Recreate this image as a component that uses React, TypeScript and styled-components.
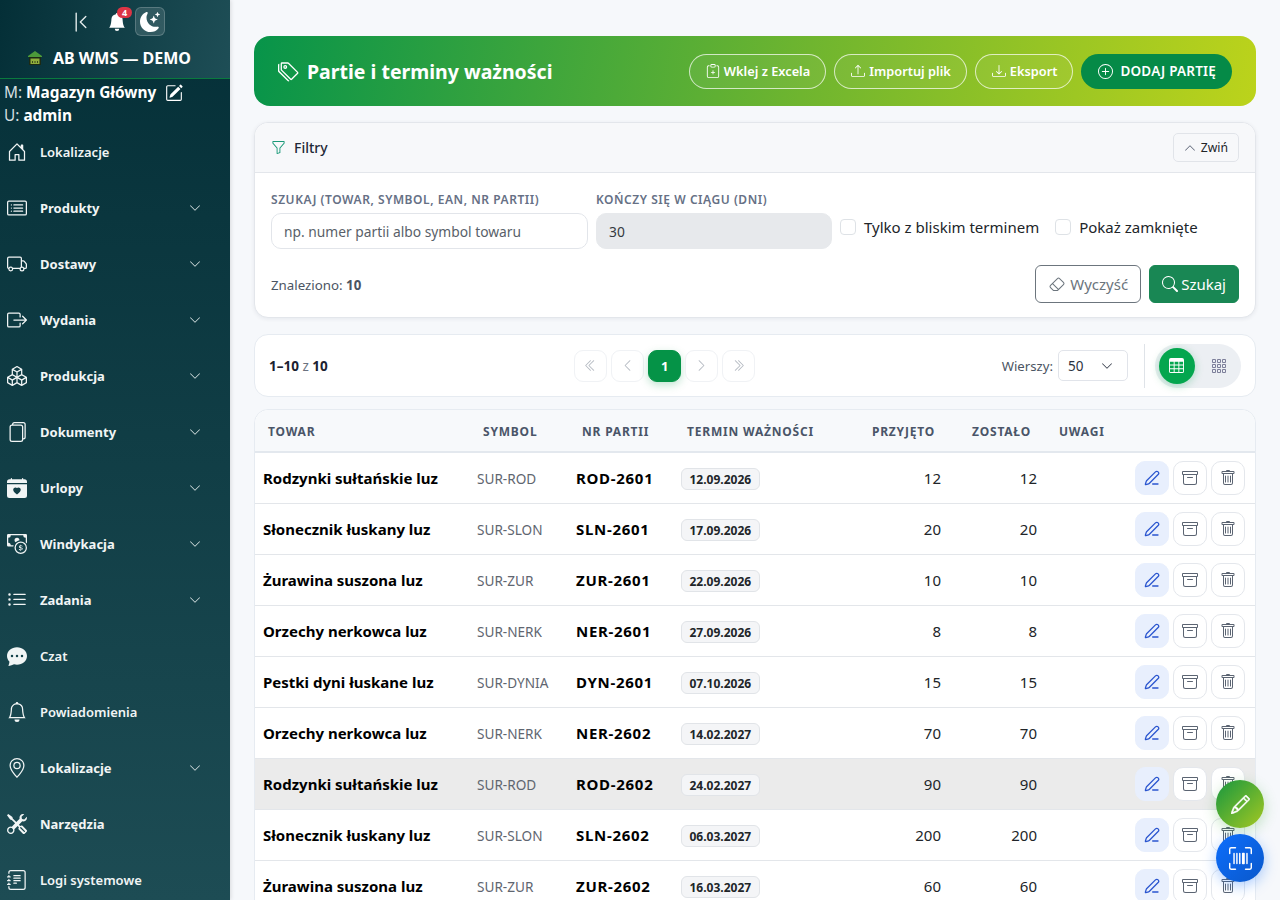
import React from 'react';
import styled, { createGlobalStyle } from 'styled-components';
import {
  BsArchive, BsBell, BsBellFill, BsBoxArrowRight, BsBoxes, BsCalendarHeartFill, BsCardList, BsCashCoin,
  BsChatDotsFill, BsChevronBarLeft, BsChevronDoubleLeft, BsChevronDoubleRight, BsChevronDown, BsChevronLeft,
  BsChevronRight, BsChevronUp, BsClipboardPlus, BsDownload, BsEraser, BsFiles, BsFunnel, BsGeoAlt,
  BsGrid3X3Gap, BsHouseDoor, BsJournalText, BsListUl, BsMoonStarsFill, BsPencil, BsPencilSquare, BsPlusCircle,
  BsSearch, BsTable, BsTags, BsTools, BsTrash, BsTruck, BsUpcScan, BsUpload,
} from 'react-icons/bs';
import { PenLine } from 'lucide-react';

const GlobalStyle = createGlobalStyle`
  html, body { margin: 0; height: 100%; overflow: hidden; }
  body {
    font-family: "Noto Sans", "Open Sans", sans-serif;
    background: #f6f8fb;
    color: #212529;
  }
  * { box-sizing: border-box; }
`;

const Layout = styled.div`
  display: flex;
  height: 900px;
  overflow: hidden;
`;

const Sidebar = styled.aside`
  width: 230px;
  flex: none;
  color: #fff;
  background: linear-gradient(180deg, #042f37 0%, #1d4c54 100%);
  box-shadow: 1px 0 4px rgba(0, 0, 0, .12);
`;

const SideHeader = styled.header`
  height: 79px;
  padding-top: 7px;
  border-bottom: 1px solid #0a7a3e;
  background: linear-gradient(100deg, #042f37 0%, #1e4e56 100%);
`;

const SideTools = styled.div`
  display: flex;
  align-items: center;
  justify-content: center;
  height: 29px;
  padding-left: 5px;
`;

const CollapseIcon = styled.span`
  display: flex;
  font-size: 22px;
  color: #e4ecec;
  margin-right: 16px;
`;

const BellWrap = styled.span`
  position: relative;
  display: flex;
  font-size: 18px;
  margin-right: 9px;
`;

const BellBadge = styled.span`
  position: absolute;
  top: -6px;
  right: -6px;
  min-width: 15px;
  height: 11px;
  border-radius: 6px;
  background: #dc3545;
  color: #fff;
  font-size: 9px;
  font-weight: 700;
  line-height: 11px;
  text-align: center;
`;

const ThemeButton = styled.span`
  display: flex;
  align-items: center;
  justify-content: center;
  width: 30px;
  height: 29px;
  border-radius: 6px;
  font-size: 20px;
  background: rgba(255, 255, 255, .12);
  border: 1px solid rgba(255, 255, 255, .2);
`;

const Brand = styled.div`
  display: flex;
  align-items: center;
  justify-content: center;
  gap: 10px;
  margin-top: 10px;
  padding-right: 12px;
  font-size: 16px;
  font-weight: 700;
  line-height: 24px;
`;

const UserInfo = styled.div`
  height: 45px;
  padding: 2px 0 0 4px;
  font-size: 15.4px;
  line-height: 23px;
  color: #d5dfe0;
`;

const InfoLine = styled.div`
  display: flex;
  align-items: center;
  gap: 4px;
  white-space: nowrap;
  strong { color: #fff; font-weight: 700; }
  svg { color: #fff; font-size: 18px; margin-left: 5px; }
`;

const Nav = styled.nav`
  display: flex;
  flex-direction: column;
`;

const NavItem = styled.a<{ $bold?: boolean }>`
  display: flex;
  align-items: center;
  height: 56px;
  padding: 0 29px 0 7px;
  color: #f1f5f5;
  font-size: 13px;
  font-weight: ${p => (p.$bold ? 700 : 600)};
`;

const NavIcon = styled.span`
  display: flex;
  justify-content: center;
  width: 20px;
  margin-right: 13px;
  font-size: 20px;
`;

const NavChevron = styled.span`
  display: flex;
  margin-left: auto;
  font-size: 12px;
  color: #dfe8e8;
`;

const Main = styled.main`
  flex: 1;
  min-width: 0;
  padding: 36px 24px 0;
  display: flex;
  flex-direction: column;
`;

const Hero = styled.section`
  display: flex;
  align-items: center;
  height: 70px;
  flex: none;
  padding: 0 24px;
  border-radius: 16px;
  color: #fff;
  background: linear-gradient(100deg, #07944a 0%, #6fb52f 55%, #bcd31b 100%);
`;

const HeroTitle = styled.h1`
  display: flex;
  align-items: center;
  gap: 8px;
  margin: 0 auto 0 0;
  font-size: 19.5px;
  font-weight: 700;
  svg { font-size: 21px; }
`;

const HeroButtons = styled.div`
  display: flex;
  gap: 8px;
`;

const GhostPill = styled.button`
  display: flex;
  align-items: center;
  gap: 4px;
  height: 35px;
  padding: 0 15px 0 16px;
  border: 1px solid rgba(255, 255, 255, .7);
  border-radius: 18px;
  background: rgba(255, 255, 255, .05);
  color: #fff;
  font: 600 12.8px "Noto Sans", sans-serif;
  svg { font-size: 14px; }
`;

const AddPill = styled.button`
  display: flex;
  align-items: center;
  gap: 7px;
  height: 35px;
  padding: 0 16px 0 17px;
  border: none;
  border-radius: 18px;
  background: #058a47;
  color: #fff;
  font: 600 13.5px "Noto Sans", sans-serif;
  letter-spacing: .2px;
  svg { font-size: 15px; }
`;

const FilterCard = styled.section`
  flex: none;
  margin-top: 16px;
  height: 196px;
  background: #fff;
  border: 1px solid #e3e6eb;
  border-radius: 14px;
  box-shadow: 0 1px 4px rgba(20, 30, 50, .07);
  overflow: hidden;
`;

const FilterHead = styled.div`
  display: flex;
  align-items: center;
  height: 50px;
  padding: 0 16px;
  background: #f7f8fa;
  border-bottom: 1px solid #e3e6eb;
`;

const FilterTitle = styled.div`
  display: flex;
  align-items: center;
  gap: 8px;
  font-size: 14px;
  font-weight: 500;
  color: #1f2937;
  margin-right: auto;
  svg { color: #1a9a78; font-size: 15px; }
`;

const CollapseButton = styled.button`
  display: flex;
  align-items: center;
  gap: 5px;
  height: 29px;
  padding: 0 10px;
  background: #f7f8fa;
  border: 1px solid #e1e4e9;
  border-radius: 5px;
  color: #212529;
  font: 400 12.2px "Noto Sans", sans-serif;
  svg { font-size: 12px; color: #596273; }
`;

const FilterBody = styled.div`
  padding: 18px 16px 0;
`;

const FilterRow = styled.div`
  display: flex;
  align-items: flex-end;
  gap: 8px;
`;

const Field = styled.label<{ $width: number }>`
  display: flex;
  flex-direction: column;
  width: ${p => p.$width}px;
`;

const FieldLabel = styled.span`
  height: 22px;
  font-size: 12px;
  font-weight: 600;
  line-height: 17px;
  letter-spacing: .55px;
  color: #667085;
  white-space: nowrap;
`;

const TextInput = styled.input<{ $filled?: boolean }>`
  height: 36px;
  padding: 0 12px;
  border: 1px solid ${p => (p.$filled ? '#e7e9ec' : '#e2e5ea')};
  border-radius: 10px;
  background: ${p => (p.$filled ? '#e7e9ec' : '#fff')};
  color: #343a40;
  font: 400 13.8px "Noto Sans", sans-serif;
  outline: none;
  &::placeholder { color: #595f69; opacity: 1; }
`;

const CheckLabel = styled.label`
  display: flex;
  align-items: center;
  gap: 8px;
  height: 36px;
  padding-bottom: 9px;
  margin-right: 8px;
  font-size: 15px;
  color: #212529;
  white-space: nowrap;
`;

const CheckBox = styled.input`
  appearance: none;
  width: 16px;
  height: 16px;
  margin: 0;
  border: 1px solid #dee2e6;
  border-radius: 4px;
  background: #fff;
`;

const FilterFoot = styled.div`
  display: flex;
  align-items: center;
  gap: 8px;
  margin-top: 16px;
`;

const FoundText = styled.div`
  margin-right: auto;
  padding-top: 1px;
  font-size: 13.3px;
  color: #4b5563;
  strong { font-weight: 700; }
`;

const ClearButton = styled.button`
  display: flex;
  align-items: center;
  gap: 5px;
  height: 38px;
  padding: 0 12px 0 13px;
  border: 1px solid #6c757d;
  border-radius: 6px;
  background: #fff;
  color: #6c757d;
  font: 400 15px "Noto Sans", sans-serif;
  svg { font-size: 16px; }
`;

const SearchButton = styled.button`
  display: flex;
  align-items: center;
  gap: 3px;
  height: 38px;
  padding: 0 12px;
  border: 1px solid #198754;
  border-radius: 6px;
  background: #198754;
  color: #fff;
  font: 400 15px "Noto Sans", sans-serif;
  svg { font-size: 16px; }
`;

const PagerCard = styled.section`
  flex: none;
  display: flex;
  justify-content: space-between;
  align-items: center;
  height: 63px;
  margin-top: 16px;
  padding: 0 14px;
  background: #fff;
  border: 1px solid #e6ebf1;
  border-radius: 14px;
`;

const RangeText = styled.div`
  font-size: 13.5px;
  color: #6b7280;
  strong { color: #1b2130; font-weight: 700; }
`;

const PagerButtons = styled.div`
  display: flex;
  gap: 4px;
`;

const PageButton = styled.span<{ $active?: boolean }>`
  display: flex;
  align-items: center;
  justify-content: center;
  width: 33px;
  height: 32px;
  border-radius: 9px;
  font-size: 13px;
  font-weight: 700;
  color: ${p => (p.$active ? '#fff' : '#b5bac2')};
  background: ${p => (p.$active ? '#059347' : '#fff')};
  border: 1px solid ${p => (p.$active ? '#059347' : '#f0f2f5')};
  box-shadow: ${p => (p.$active ? '0 3px 8px rgba(5, 147, 71, .25)' : 'none')};
`;

const PagerRight = styled.div`
  display: flex;
  align-items: center;
`;

const RowsLabel = styled.span`
  font-size: 13.2px;
  color: #4b5563;
  margin-right: 5px;
`;

const RowsSelect = styled.div`
  display: flex;
  align-items: center;
  justify-content: space-between;
  width: 70px;
  height: 31px;
  padding: 0 14px 0 9px;
  border: 1px solid #e1e4ea;
  border-radius: 5px;
  font-size: 13.5px;
  color: #2b3240;
  svg { font-size: 12px; }
`;

const PagerDivider = styled.span`
  width: 1px;
  height: 44px;
  margin: 0 10px 0 16px;
  background: #dfe3e8;
`;

const ViewSwitch = styled.div`
  display: flex;
  align-items: center;
  width: 86px;
  height: 44px;
  padding: 0 4px;
  border-radius: 22px;
  background: #eceff3;
`;

const ViewActive = styled.span`
  display: flex;
  align-items: center;
  justify-content: center;
  width: 36px;
  height: 36px;
  border-radius: 50%;
  background: #04a64e;
  color: #fff;
  font-size: 15px;
  box-shadow: 0 2px 8px rgba(4, 166, 78, .3);
`;

const ViewIdle = styled.span`
  display: flex;
  justify-content: center;
  flex: 1;
  padding-left: 6px;
  color: #7d7f9a;
  font-size: 16px;
`;

const TableCard = styled.section`
  margin-top: 12px;
  background: #fff;
  border: 1px solid #e6ebf1;
  border-radius: 14px 14px 0 0;
  width: 1002px;
  flex: none;
`;

const Table = styled.table`
  width: 1000px;
  table-layout: fixed;
  border-collapse: collapse;
`;

const Th = styled.th<{ $right?: boolean }>`
  height: 42px;
  padding: 1px 14px 0;
  background: #f7f9fb;
  border-bottom: 2px solid #e3e8ee;
  color: #4a5568;
  font-size: 12px;
  font-weight: 700;
  letter-spacing: .8px;
  text-align: ${p => (p.$right ? 'right' : 'left')};
  white-space: nowrap;
  &:first-child { border-top-left-radius: 14px; padding-left: 13px; }
  &:last-child { border-top-right-radius: 14px; }
`;

const Tr = styled.tr<{ $hover?: boolean }>`
  background: ${p => (p.$hover ? '#ebebeb' : '#fff')};
`;

const Td = styled.td<{ $right?: boolean }>`
  height: 51px;
  padding: 0 8px;
  border-bottom: 1px solid #e3e6ea;
  font-size: 15px;
  color: #212529;
  text-align: ${p => (p.$right ? 'right' : 'left')};
  white-space: nowrap;
`;

const NameCell = styled(Td)`
  font-weight: 700;
  color: #000;
`;

const BatchCell = styled(NameCell)`
  letter-spacing: .7px;
`;

const SymbolCell = styled(Td)`
  padding-top: 1px;
  font-size: 13.6px;
  color: #5f6670;
`;

const DateBadge = styled.span`
  display: inline-block;
  height: 22px;
  margin-top: 3px;
  padding: 0 7.5px;
  background: #f4f5f7;
  border: 1px solid #e1e4e8;
  border-radius: 6px;
  color: #212529;
  font-size: 12px;
  font-weight: 700;
  line-height: 21px;
`;

const Actions = styled.div`
  display: flex;
  justify-content: flex-end;
  gap: 4px;
  padding-right: 2px;
`;

const ActionButton = styled.span<{ $edit?: boolean }>`
  display: flex;
  align-items: center;
  justify-content: center;
  width: 34px;
  height: 34px;
  border-radius: 10px;
  font-size: 16px;
  color: ${p => (p.$edit ? '#2a55cf' : '#5b6472')};
  background: ${p => (p.$edit ? '#e8effd' : '#fff')};
  border: 1px solid ${p => (p.$edit ? '#e8effd' : '#e4e7ec')};
`;

const Fabs = styled.div`
  position: fixed;
  right: 16px;
  top: 780px;
  display: flex;
  flex-direction: column;
  gap: 6px;
`;

const Fab = styled.span<{ $blue?: boolean }>`
  display: flex;
  align-items: center;
  justify-content: center;
  width: 48px;
  height: 48px;
  border-radius: 50%;
  color: #fff;
  font-size: ${p => (p.$blue ? '23px' : '19px')};
  background: ${p => (p.$blue
    ? 'linear-gradient(135deg, #0d6efd, #0a58ca)'
    : 'linear-gradient(135deg, #17973f, #a4c822)')};
  box-shadow: 0 4px 14px ${p => (p.$blue ? 'rgba(13, 110, 253, .35)' : 'rgba(60, 170, 60, .3)')};
  svg { stroke: currentColor; stroke-width: ${p => (p.$blue ? 0 : 0.5)}; }
`;

const navItems = [
  { label: 'Lokalizacje', icon: <BsHouseDoor />, sub: false },
  { label: 'Produkty', icon: <BsCardList />, sub: true },
  { label: 'Dostawy', icon: <BsTruck />, sub: true },
  { label: 'Wydania', icon: <BsBoxArrowRight />, sub: true },
  { label: 'Produkcja', icon: <BsBoxes />, sub: true },
  { label: 'Dokumenty', icon: <BsFiles />, sub: true },
  { label: 'Urlopy', icon: <BsCalendarHeartFill />, sub: true },
  { label: 'Windykacja', icon: <BsCashCoin />, sub: true },
  { label: 'Zadania', icon: <BsListUl />, sub: true },
  { label: 'Czat', icon: <BsChatDotsFill />, sub: false },
  { label: 'Powiadomienia', icon: <BsBell />, sub: false },
  { label: 'Lokalizacje', icon: <BsGeoAlt />, sub: true },
  { label: 'Narzędzia', icon: <BsTools />, sub: false, bold: true },
  { label: 'Logi systemowe', icon: <BsJournalText />, sub: false },
];

const rows = [
  ['Rodzynki sułtańskie luz', 'SUR-ROD', 'ROD-2601', '12.09.2026', '12'],
  ['Słonecznik łuskany luz', 'SUR-SLON', 'SLN-2601', '17.09.2026', '20'],
  ['Żurawina suszona luz', 'SUR-ZUR', 'ZUR-2601', '22.09.2026', '10'],
  ['Orzechy nerkowca luz', 'SUR-NERK', 'NER-2601', '27.09.2026', '8'],
  ['Pestki dyni łuskane luz', 'SUR-DYNIA', 'DYN-2601', '07.10.2026', '15'],
  ['Orzechy nerkowca luz', 'SUR-NERK', 'NER-2602', '14.02.2027', '70'],
  ['Rodzynki sułtańskie luz', 'SUR-ROD', 'ROD-2602', '24.02.2027', '90'],
  ['Słonecznik łuskany luz', 'SUR-SLON', 'SLN-2602', '06.03.2027', '200'],
  ['Żurawina suszona luz', 'SUR-ZUR', 'ZUR-2602', '16.03.2027', '60'],
];

const colWidths = [214, 99, 105, 156, 120, 96, 80, 130];

const WarehouseLogo = () => (
  <svg width="16" height="16" viewBox="0 0 16 16">
    <path d="M1 6 8 1l7 5v1H1z" fill="#4c9a3a" />
    <rect x="2" y="7" width="12" height="8" fill="#1c2a14" />
    <rect x="3.500" y="8.500" width="9" height="5.500" fill="#8fae3c" />
    <path d="M5 12h1M7.500 12h1M10 12h1" stroke="#1c2a14" strokeWidth="1.4" />
  </svg>
);

const App = () => {
  return (
    <Layout>
      <GlobalStyle />
      <Sidebar>
        <SideHeader>
          <SideTools>
            <CollapseIcon><BsChevronBarLeft /></CollapseIcon>
            <BellWrap>
              <BsBellFill />
              <BellBadge>4</BellBadge>
            </BellWrap>
            <ThemeButton><BsMoonStarsFill /></ThemeButton>
          </SideTools>
          <Brand>
            <WarehouseLogo />
            AB WMS — DEMO
          </Brand>
        </SideHeader>
        <UserInfo>
          <InfoLine>M: <strong>Magazyn Główny</strong><BsPencilSquare /></InfoLine>
          <InfoLine>U: <strong>admin</strong></InfoLine>
        </UserInfo>
        <Nav>
          {navItems.map((item, i) => (
            <NavItem key={i} $bold={item.sub || item.bold}>
              <NavIcon>{item.icon}</NavIcon>
              {item.label}
              {item.sub && <NavChevron><BsChevronDown /></NavChevron>}
            </NavItem>
          ))}
        </Nav>
      </Sidebar>
      <Main>
        <Hero>
          <HeroTitle><BsTags />Partie i terminy ważności</HeroTitle>
          <HeroButtons>
            <GhostPill><BsClipboardPlus />Wklej z Excela</GhostPill>
            <GhostPill><BsUpload />Importuj plik</GhostPill>
            <GhostPill><BsDownload />Eksport</GhostPill>
            <AddPill><BsPlusCircle />DODAJ PARTIĘ</AddPill>
          </HeroButtons>
        </Hero>

        <FilterCard>
          <FilterHead>
            <FilterTitle><BsFunnel />Filtry</FilterTitle>
            <CollapseButton><BsChevronUp />Zwiń</CollapseButton>
          </FilterHead>
          <FilterBody>
            <FilterRow>
              <Field $width={317}>
                <FieldLabel>SZUKAJ (TOWAR, SYMBOL, EAN, NR PARTII)</FieldLabel>
                <TextInput placeholder="np. numer partii albo symbol towaru" />
              </Field>
              <Field $width={236}>
                <FieldLabel>KOŃCZY SIĘ W CIĄGU (DNI)</FieldLabel>
                <TextInput $filled defaultValue="30" />
              </Field>
              <CheckLabel><CheckBox type="checkbox" />Tylko z bliskim terminem</CheckLabel>
              <CheckLabel><CheckBox type="checkbox" />Pokaż zamknięte</CheckLabel>
            </FilterRow>
            <FilterFoot>
              <FoundText>Znaleziono: <strong>10</strong></FoundText>
              <ClearButton><BsEraser />Wyczyść</ClearButton>
              <SearchButton><BsSearch />Szukaj</SearchButton>
            </FilterFoot>
          </FilterBody>
        </FilterCard>

        <PagerCard>
          <RangeText><strong>1–10</strong> z <strong>10</strong></RangeText>
          <PagerButtons>
            <PageButton><BsChevronDoubleLeft /></PageButton>
            <PageButton><BsChevronLeft /></PageButton>
            <PageButton $active>1</PageButton>
            <PageButton><BsChevronRight /></PageButton>
            <PageButton><BsChevronDoubleRight /></PageButton>
          </PagerButtons>
          <PagerRight>
            <RowsLabel>Wierszy:</RowsLabel>
            <RowsSelect>50<BsChevronDown /></RowsSelect>
            <PagerDivider />
            <ViewSwitch>
              <ViewActive><BsTable /></ViewActive>
              <ViewIdle><BsGrid3X3Gap /></ViewIdle>
            </ViewSwitch>
          </PagerRight>
        </PagerCard>

        <TableCard>
          <Table>
            <colgroup>
              {colWidths.map((w, i) => <col key={i} style={{ width: w }} />)}
            </colgroup>
            <thead>
              <tr>
                <Th>TOWAR</Th>
                <Th>SYMBOL</Th>
                <Th>NR PARTII</Th>
                <Th>TERMIN WAŻNOŚCI</Th>
                <Th $right>PRZYJĘTO</Th>
                <Th $right>ZOSTAŁO</Th>
                <Th>UWAGI</Th>
                <Th />
              </tr>
            </thead>
            <tbody>
              {rows.map((r, i) => (
                <Tr key={i} $hover={i === 6}>
                  <NameCell>{r[0]}</NameCell>
                  <SymbolCell>{r[1]}</SymbolCell>
                  <BatchCell>{r[2]}</BatchCell>
                  <Td><DateBadge>{r[3]}</DateBadge></Td>
                  <Td $right>{r[4]}</Td>
                  <Td $right>{r[4]}</Td>
                  <Td />
                  <Td>
                    <Actions>
                      <ActionButton $edit><PenLine size={16} strokeWidth={1.9} /></ActionButton>
                      <ActionButton><BsArchive /></ActionButton>
                      <ActionButton><BsTrash /></ActionButton>
                    </Actions>
                  </Td>
                </Tr>
              ))}
            </tbody>
          </Table>
        </TableCard>
      </Main>
      <Fabs>
        <Fab><BsPencil /></Fab>
        <Fab $blue><BsUpcScan /></Fab>
      </Fabs>
    </Layout>
  );
};

export default App;
